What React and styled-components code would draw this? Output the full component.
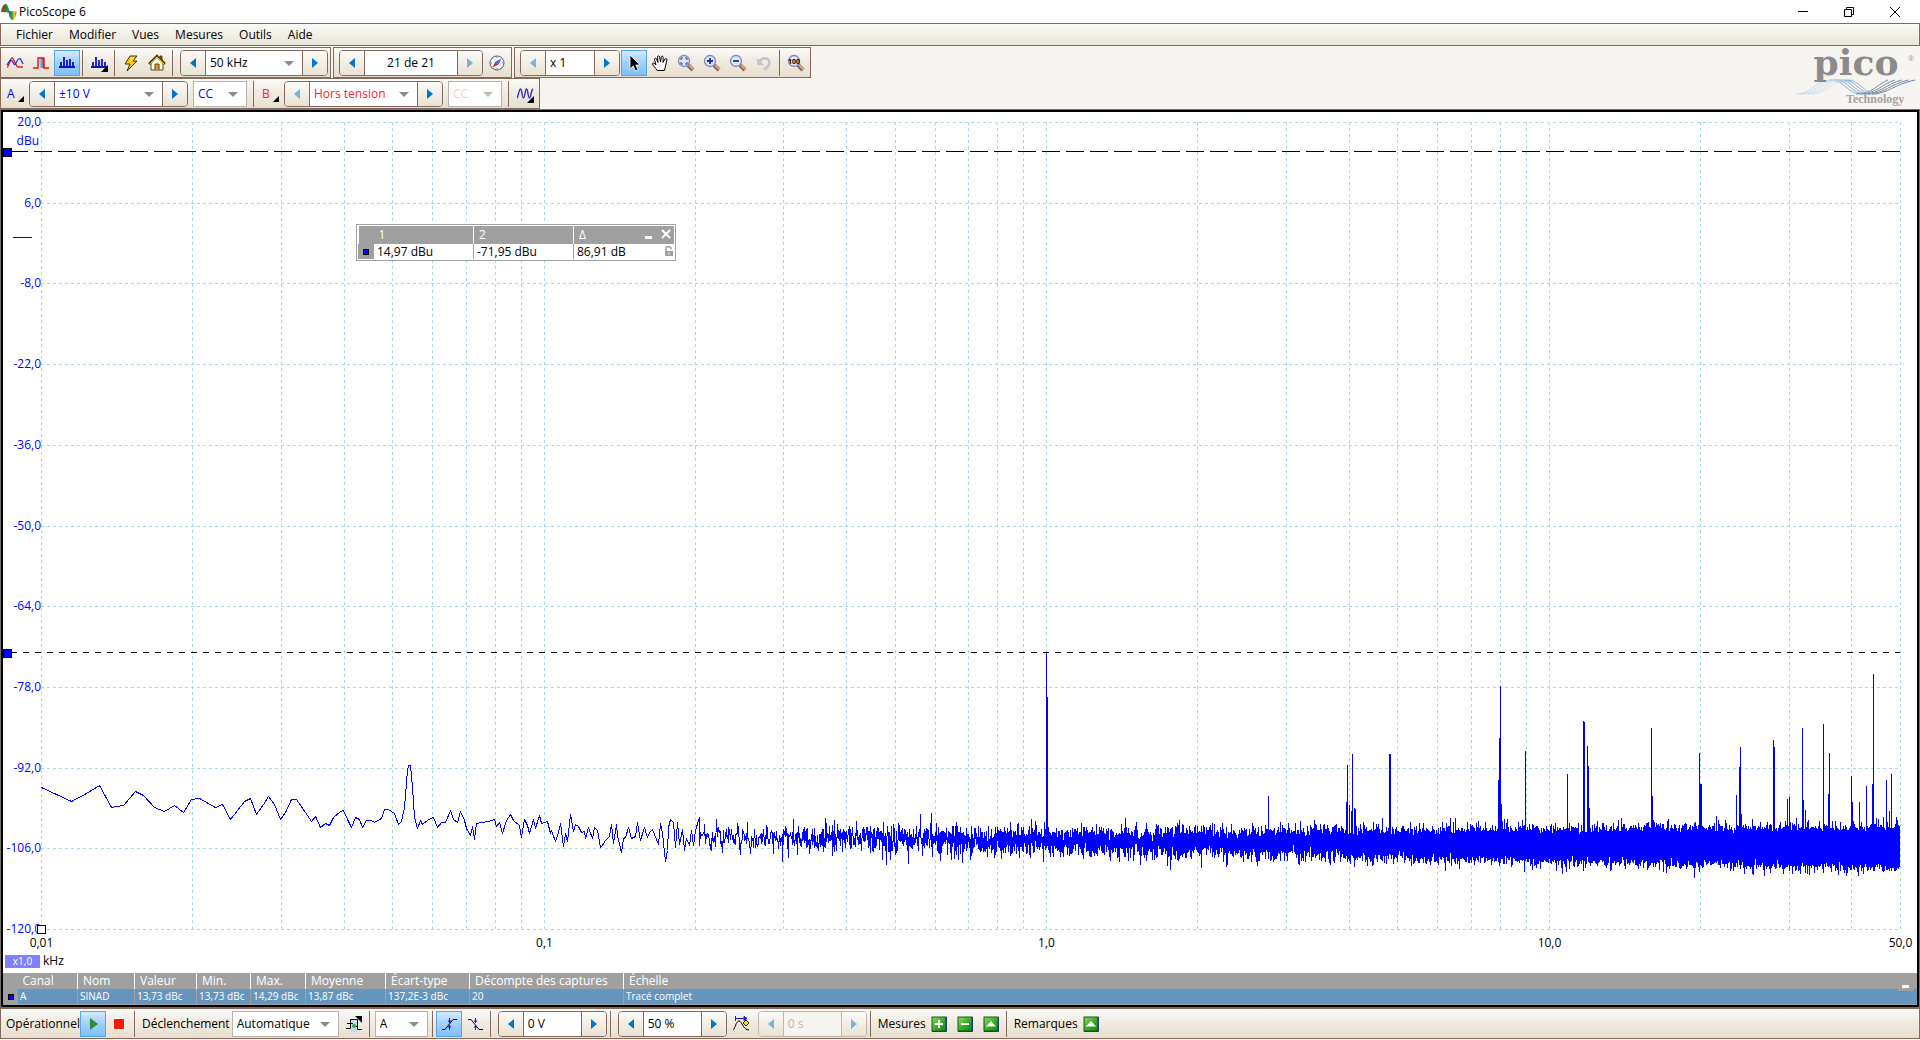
import React, {useLayoutEffect, useRef, useState} from 'react';
import styled, {createGlobalStyle, css} from 'styled-components';

const BROWN = '#85695c';
const BLUE = '#0000ff';

const GlobalStyle = createGlobalStyle`
  * {
    box-sizing: border-box;
  }

  body {
    margin: 0;
    background: #f6f4f0;
    color: #000;
    font: 12px/16px "Open Sans", "Noto Sans", sans-serif;
  }

  button, input, select {
    font: inherit;
    color: inherit;
  }
`;

const Window = styled.div`
  display: flex;
  flex-direction: column;
  height: 100vh;
  min-height: 480px;
  padding-bottom: 1px;
  overflow: hidden;
`;

const TitleBar = styled.header`
  display: flex;
  align-items: center;
  height: 23px;
  padding: 0 2px 0 1px;
  background: #fff;

  h1 {
    flex: 1;
    margin: 0 0 0 2px;
    font-size: 12px;
    font-weight: 400;
  }
`;

const WindowButton = styled.button`
  display: flex;
  align-items: center;
  justify-content: center;
  width: 46px;
  height: 22px;
  padding: 0;
  border: 0;
  background: none;
`;

const MenuBar = styled.nav`
  display: flex;
  align-items: center;
  height: 23px;
  margin-bottom: 1px;
  padding-left: 7px;
  border: 1px solid ${BROWN};
  background: linear-gradient(#fbfaf7, #e9e4d8);

  a {
    padding: 0 8px;
    color: inherit;
    text-decoration: none;
  }
`;

const Header = styled.div`
  display: flex;
  justify-content: space-between;
  height: 62px;
`;

const Strips = styled.div`
  display: flex;
  gap: 2px;
`;

const Strip = styled.div`
  display: flex;
  align-items: center;
  height: 31px;
  padding: 1px;
  border: 1px solid ${BROWN};
  background: linear-gradient(#fcfbf9, #f1ede4 40%, #e7dfcd);
`;

const Tool = styled.button`
  position: relative;
  display: flex;
  flex: none;
  align-items: center;
  justify-content: center;
  width: ${({$narrow}) => ($narrow ? 23 : 26)}px;
  height: 26px;
  padding: 0;
  border: 1px solid transparent;
  background: none;

  ${({$active}) => $active && css`
    border-color: #58a6e4;
    background: linear-gradient(#d3e9fd, #a4d2fb 45%, #7dc0fb);
  `}
`;

const ChannelTool = styled(Tool)`
  justify-content: flex-start;
  padding-left: 4px;
  color: ${({$color}) => $color};

  svg {
    margin: 10px 0 0 auto;
  }
`;

const Separator = styled.i`
  flex: none;
  width: 1px;
  height: 26px;
  margin: 0 3px 0 2px;
  background: ${BROWN};
`;

const SpinBox = styled.div`
  display: flex;
  flex: none;
  width: ${({$width}) => $width}px;
  height: 26px;
  margin: 0 1px 0 4px;
  overflow: hidden;
  border: 1px solid ${({$off}) => ($off ? '#bdb6ae' : BROWN)};
  border-radius: 4px;
  background: ${({$off}) => ($off ? '#f6f4f0' : '#fff')};
`;

const Step = styled.button`
  display: flex;
  align-items: center;
  justify-content: center;
  width: 25px;
  padding: 0;
  border: 0 solid ${({$off}) => ($off ? '#bdb6ae' : BROWN)};
  border-width: ${({$next}) => ($next ? '0 0 0 1px' : '0 1px 0 0')};
  background: linear-gradient(#fbfaf7, #e9e2d3);

  svg {
    opacity: ${({disabled}) => (disabled ? 0.5 : 1)};
  }
`;

const Field = styled.input`
  flex: 1;
  min-width: 0;
  padding: 0 4px;
  border: 0;
  background: none;
  text-align: ${({$center}) => ($center ? 'center' : 'left')};

  &:disabled {
    color: #bdb6ae;
  }
`;

const SelectBox = styled.span`
  position: relative;
  display: flex;
  flex: ${({$width}) => ($width ? 'none' : '1')};
  min-width: 0;
  ${({$width}) => $width && css`
    width: ${$width}px;
    height: 26px;
    margin: 0 4px;
    border: 1px solid #b9b1aa;
    background: #fff;
  `}

  select {
    width: 100%;
    padding: 0 16px 0 4px;
    border: 0;
    appearance: none;
    background: none;
    color: ${({$color}) => $color || '#000'};
    opacity: 1;
  }

  svg {
    position: absolute;
    top: 50%;
    right: 8px;
    margin-top: -2px;
    pointer-events: none;
  }
`;

const Label = styled.span`
  margin: 0 0 0 4px;
`;

const Stage = styled.main`
  display: flex;
  flex: 1;
  flex-direction: column;
  min-height: 0;
  margin: 1px 1px;
  border: 2px solid #000;
  outline: 1px solid #77706c;
  background: #fff;
`;

const PlotArea = styled.section`
  position: relative;
  flex: 1;
  min-height: 0;
  overflow: hidden;

  > svg {
    display: block;
    position: absolute;
  }
`;

const AxisUnit = styled.div`
  position: absolute;
  bottom: 4px;
  left: 2px;
  display: flex;
  gap: 3px;
  align-items: center;

  b {
    width: 35px;
    background: #8080ff;
    color: #fff;
    font-size: 10px;
    font-weight: 400;
    line-height: 13px;
    text-align: center;
  }
`;

const RulerPanel = styled.div`
  position: absolute;
  top: 112px;
  left: 353px;
  width: 320px;
  padding: 1px;
  border: 1px solid #a0a0a0;
  background: #fff;
`;

const RulerTable = styled.table`
  width: 100%;
  table-layout: fixed;
  border-collapse: collapse;
  color: #000;
  line-height: 16px;

  thead tr {
    height: 18px;
  }

  tbody tr {
    height: 15px;
    line-height: 15px;
  }

  thead, td:first-child {
    background: #a0a0a0;
  }

  th {
    padding: 0 5px;
    border-left: 1px solid #fff;
    color: #fff;
    font-weight: 400;
    text-align: left;
  }

  th:nth-child(-n + 2) {
    border-left: 0;
  }

  td {
    padding: 0 3px;
    border-left: 1px solid #a0a0a0;
  }
`;

const PanelButtons = styled.div`
  position: absolute;
  top: 4px;
  right: 4px;
  display: flex;
  gap: 6px;

  button {
    display: flex;
    padding: 0;
    border: 0;
    background: none;
  }
`;

const Lock = styled.span`
  float: right;
  display: flex;
  margin: 2px -2px 0 0;
`;

const MeasureArea = styled.div`
  position: relative;
  border-bottom: 1px solid #a0a0a0;
  background: #a0a0a0;
`;

const MeasureTable = styled.table`
  width: 100%;
  table-layout: fixed;
  border-collapse: collapse;
  color: #fff;

  th {
    height: 16px;
    padding: 0 5px;
    border-left: 1px solid #fff;
    font-weight: 400;
    line-height: 16px;
    text-align: left;
    white-space: nowrap;
  }

  td {
    height: 15px;
    padding: 0 2px;
    border-left: 1px solid #a0a0a0;
    background: #6696bd;
    font-size: 10px;
    line-height: 15px;
  }

  th:nth-child(-n + 2) {
    border-left: 0;
  }

  td:first-child {
    background: #a0a0a0;
  }
`;

const Marker = styled.i`
  display: block;
  width: 6px;
  height: 6px;
  margin: 0 auto;
  border: 1px solid #000;
  background: ${BLUE};
`;

const Collapse = styled.button`
  position: absolute;
  top: 9px;
  right: 3px;
  width: 16px;
  height: 9px;
  padding: 3px 5px 3px 4px;
  border: 0;
  background: #a0a0a0;

  &::before {
    content: "";
    display: block;
    height: 3px;
    background: #fff;
  }
`;

const Footer = styled(Strip).attrs({as: 'footer'})`
  flex: none;

  > ${SelectBox} {
    margin: 0 2px;
  }
`;

/* ---- icons ---- */

const Arrow = ({next}) => (
  <svg width="6" height="10" viewBox="0 0 6 10" fill="#0078c8">
    <path d={next ? 'M0 0L6 5L0 10Z' : 'M6 0L0 5L6 10Z'} />
  </svg>
);

const Caret = ({off}) => (
  <svg width="10" height="5" viewBox="0 0 10 5" fill={off ? '#c3bab3' : '#8c8c8c'}>
    <path d="M0 0H10L5 5Z" />
  </svg>
);

const Icon = ({children, size = 18}) => (
  <svg width={size} height={size} viewBox="0 0 18 18" fill="none">{children}</svg>
);

const Corner = () => <path d="M18 11V18H11Z" fill="#000" />;

const AppLogo = () => (
  <svg width="16" height="16" viewBox="0 0 16 16">
    <defs>
      <linearGradient id="app" x1="0" x2="1" y1="0" y2="0">
        <stop offset="0" stopColor="#d33" />
        <stop offset=".22" stopColor="#5c5a28" />
        <stop offset=".4" stopColor="#1ea032" />
        <stop offset=".55" stopColor="#2b58c8" />
        <stop offset=".72" stopColor="#38a838" />
        <stop offset=".86" stopColor="#f0d020" />
        <stop offset="1" stopColor="#d43020" />
      </linearGradient>
    </defs>
    <path
      fill="url(#app)"
      d="M0 7C1 2 3 0 4.500 0C7 0 7.500 5 8.500 7L15.500 7.500C15 13 13.500 16 11.500 16C9 16 8.500 12 7.500 8.500L0 8Z"
    />
  </svg>
);

const ScopeIcon = () => (
  <Icon>
    <path d="M1 13C3 13 4 4 6 4S10 13 12 13H17" stroke="#e02030" strokeWidth="1.500" />
    <path d="M1 11C3 8 4 5 6 7S8 13 10 9S13 3 15 6L17 10" stroke="#2030d8" strokeWidth="1.300" />
  </Icon>
);

const PersistenceIcon = () => (
  <Icon>
    <defs>
      <linearGradient id="pers" x1="0" x2="1" y1="0" y2="0">
        <stop offset="0" stopColor="#f4f8fa" />
        <stop offset=".5" stopColor="#60c0e8" />
        <stop offset="1" stopColor="#d02050" />
      </linearGradient>
    </defs>
    <path d="M6 4H12V14H6Z" fill="url(#pers)" />
    <path d="M1 14H6V4H12V14H17" stroke="#e81010" strokeWidth="1.400" />
  </Icon>
);

const SpectrumIcon = ({corner}) => (
  <Icon>
    <path d="M1 13H17M3 13V8M6 13V3M9 13V6M12 13V5M15 13V8" stroke="#1010c8" strokeWidth="1.800" />
    {corner && <Corner />}
  </Icon>
);

const BoltIcon = () => (
  <Icon>
    <path d="M8 2H15L11 7H15L5 17L8 10H3Z" fill="#ffc810" stroke="#4a3000" />
    <path d="M9 4H12L8 8" stroke="#fff0a0" />
  </Icon>
);

const HomeIcon = () => (
  <Icon>
    <path d="M12 2H14V6H12Z" fill="#b04030" stroke="#503010" strokeWidth=".8" />
    <path d="M3 9L9 3L15 9V16H3Z" fill="#fffbe0" stroke="#604010" />
    <path d="M1 10L9 2L17 10" stroke="#604010" strokeWidth="2.500" />
    <path d="M2 10L9 3L16 10" stroke="#f8c830" />
    <path d="M7 16V10H11V16" fill="#d89830" stroke="#604010" />
  </Icon>
);

const CompassIcon = () => (
  <Icon>
    <circle cx="9" cy="9" r="7" fill="#f6f8ff" stroke="#505868" />
    <path d="M9 3V4M9 14V15M3 9H4M14 9H15" stroke="#4080e0" />
    <path d="M13.500 4.500L10.500 10.500L7.500 7.500Z" fill="#4068e8" />
    <path d="M4.500 13.500L7.500 7.500L10.500 10.500Z" fill="#e82020" />
  </Icon>
);

const PointerIcon = () => (
  <Icon>
    <path d="M5 1V15L8.300 12L10.500 17L13 16L10.800 11H15Z" fill="#000" stroke="#fff" strokeWidth=".8" />
  </Icon>
);

const HandIcon = () => (
  <Icon>
    <path
      d="M6 16.500C5 14 2 12 1.500 10C1.500 8.500 3.500 8.500 5 11L3.500 5.500C3.500 4 5 3.800 5.500 5L7 8.500L6.500 3C6.800 1.500 8.300 1.500 8.600 3L9.500 8L10.300 3C10.800 1.700 12.200 2 12.200 3.300L12 8.500L14 5C15 4 16.200 4.700 15.900 6L14.500 12L13.500 16.500Z"
      fill="#fff"
      stroke="#000"
    />
  </Icon>
);

const Magnifier = ({kind}) => (
  <Icon>
    <path d="M11 11L16 16" stroke="#706878" strokeWidth="4" />
    <path d="M12 11L16.500 15.500" stroke="#f4a050" strokeWidth="2" />
    <circle cx="7" cy="7" r="5.500" fill="#d4eaff" stroke="#8888a8" strokeWidth="1.300" />
    {kind === 'in' && <path d="M4 7H10M7 4V10" stroke="#2828a8" strokeWidth="1.800" />}
    {kind === 'out' && <path d="M4 7H10" stroke="#2828a8" strokeWidth="1.800" />}
    {kind === 'area' && <path d="M4 6V4H6M8 4H10V6M10 8V10H8M6 10H4V8" stroke="#3838b8" />}
    {kind === 'full' && <text x="1" y="10" fontSize="7" fontWeight="700" fill="#000">100</text>}
  </Icon>
);

const UndoIcon = () => (
  <Icon>
    <path d="M4 8C8 2 16 4 14 10C13.500 13 11 14.500 9 15.500" stroke="#c0c6d4" strokeWidth="2.600" />
    <path d="M2 4V11H9Z" fill="#c0c6d4" />
  </Icon>
);

const MathIcon = () => (
  <Icon>
    <path d="M1 13C2 13 3 4 4.500 4S6 13 7.500 13S9 4 10.500 4S12 13 13.500 13S15 5 17 4" stroke="#3030b0" strokeWidth="1.400" />
    <Corner />
  </Icon>
);

const PlayIcon = () => (
  <Icon>
    <path d="M6 3L14 9L6 15Z" fill="#2e8b2e" />
  </Icon>
);

const StopIcon = () => (
  <Icon>
    <path d="M3 3H15V15H3Z" fill="#fff" />
    <path d="M4 4H14V14H4Z" fill="#ff1800" />
  </Icon>
);

const TriggerIcon = () => (
  <Icon>
    <path d="M6 5H13V17H6Z" fill="#c4dcf8" />
    <path d="M1 13.500H5.500V4.500H12.500V14.500H17" stroke="#000" />
    <path d="M2 8.500H8M9 11.500H13" stroke="#000" />
    <path d="M10 1H17V8Z" fill="#000" />
    <circle cx="9" cy="11" r="2" fill="#18c030" />
  </Icon>
);

const EdgeIcon = ({falling}) => (
  <Icon>
    <path
      d={falling ? 'M2 4.500H5L13 14.500H17' : 'M2 14.500H5L13 4.500H17'}
      stroke="#000"
    />
    <path d="M9.500 3V8M9.500 10V15" stroke="#1818e0" />
    <path d="M7.500 5.500H11.500L9.500 8ZM7.500 12.500H11.500L9.500 10Z" fill="#1818e0" />
  </Icon>
);

const DelayIcon = () => (
  <Icon>
    <path d="M1 15C3 14 4 6 7 6S11 15 17 15" stroke="#000" />
    <path d="M4 3.500H15" stroke="#1818e0" />
    <path d="M3.500 1V6M12 1.500L15 3.500L12 5.500Z" stroke="#1818e0" fill="#1818e0" />
    <path d="M14 5L17 8L14 11L11 8Z" fill="#f8e010" stroke="#303020" />
  </Icon>
);

const GreenIcon = ({kind}) => (
  <Icon>
    <defs>
      <linearGradient id={`green-${kind}`} x1="0" x2="1" y1="0" y2="1">
        <stop offset="0" stopColor="#8cdc60" />
        <stop offset=".55" stopColor="#38a828" />
        <stop offset="1" stopColor="#009000" />
      </linearGradient>
    </defs>
    <rect x="2" y="2" width="14" height="14" fill={`url(#green-${kind})`} stroke="#185820" />
    <path d="M16.500 2V16.500H2" stroke="#203870" />
    {kind === 'add' && <path d="M9 5V13M5 9H13" stroke="#fff" strokeWidth="2" />}
    {kind === 'remove' && <path d="M5 9H13" stroke="#fff" strokeWidth="2" />}
    {(kind === 'up' || kind === 'notes') && <path d="M4 11.500L9 6L14 11.500Z" fill="#fff" />}
  </Icon>
);

const waves = [0, 4, 8, 12, 16];

const Logo = styled.svg`
  flex: none;
  overflow: visible;
`;

const PicoLogo = () => (
  <Logo width="124" height="62" viewBox="0 0 124 62" fill="none">
    {waves.map((d, i) => (
      <g key={d}>
        <path
          d={`M${d} 47C${16 + d} 47 ${20 + d} 33 ${34 + d} 33H${42 + d}`}
          stroke="#c2dbf0"
          opacity={1 - i * 0.1}
        />
        <path
          d={`M${34 + d} 33C${50 + d} 33 ${50 + d} 47 ${66 + d} 47`}
          stroke="#8fb2d6"
        />
        <path
          d={`M${60 + d} 47C${76 + d} 47 ${82 + d} 37 ${92 + d * 1.7} 33`}
          stroke="#76889e"
        />
      </g>
    ))}
    <text
      x="60"
      y="28"
      fontFamily="DejaVu Serif"
      fontSize="36"
      fontWeight="700"
      textAnchor="middle"
      fill="#8b8b8b"
    >
      pico
    </text>
    <text x="112" y="14" fontSize="7" fill="#999">®</text>
    <text x="50" y="56" fontFamily="Liberation Serif" fontSize="12" fontWeight="700" fill="#a2a2a2">
      Technology
    </text>
  </Logo>
);

/* ---- spectrum ---- */

// plot units: one per pixel at a width of 1859 and a height of 807
const PLOT_W = 1859;
const PLOT_H = 807;
const DECADE = PLOT_W / Math.log10(5000);

const lowBand = [
  0, 665, 30, 679, 45, 671, 58, 663, 70, 685, 82, 683, 94, 669, 102, 673, 113, 685, 123, 689,
  133, 683, 142, 690, 150, 677, 158, 676, 174, 685, 181, 682, 189, 697, 203, 679, 209, 676,
  215, 692, 222, 682, 227, 674, 233, 682, 239, 697, 244, 690, 250, 677, 255, 677, 264, 690,
  270, 699, 274, 694, 279, 705, 284, 701, 288, 703, 292, 695, 299, 689, 302, 688, 306, 697,
  310, 705, 314, 695, 318, 697, 321, 705, 325, 698, 330, 698, 333, 700, 340, 696, 343, 687,
  347, 687, 353, 691, 357, 702, 360, 699, 363, 685, 366, 648, 367, 643, 369, 643, 371, 665,
  373, 695, 376, 706, 379, 698, 381, 702, 387, 697, 392, 695, 396, 705, 400, 700, 404, 700,
  409, 688, 412, 697, 416, 700, 419, 689, 423, 698, 425, 706, 429, 713, 431, 704, 433, 717,
  435, 701, 447, 699, 453, 697, 455, 704, 458, 700, 461, 711, 465, 698, 469, 692, 472, 698,
  478, 703, 480, 715, 483, 697, 486, 703, 488, 711, 492, 697, 494, 706, 498, 693, 500, 701,
  506, 699, 509, 711, 510, 708, 514, 719, 517, 710, 519, 701, 522, 724, 524, 711, 526, 719,
  529, 692, 532, 709, 534, 702, 537, 704, 540, 710, 543, 709, 544, 716, 547, 705, 551, 716,
  553, 705, 556, 708, 559, 725, 561, 723, 564, 718, 568, 714, 570, 702, 572, 721, 575, 702,
  576, 713, 580, 730, 582, 716, 584, 715, 587, 705, 590, 716, 594, 714, 596, 700, 599, 718,
  603, 705, 606, 715, 608, 710, 611, 707, 615, 717, 617, 722, 619, 701, 621, 711, 624, 739,
  626, 728, 627, 705, 629, 697, 632, 700, 634, 725, 636, 700, 638, 722, 641, 707, 643, 728,
  645, 716, 648, 723, 650, 708, 652, 723, 654, 708,
];

const peaks = [
  [1005, 530], [1006, 574], [1227, 673], [1305, 679], [1306, 642], [1308, 682], [1310, 688],
  [1311, 631], [1313, 685], [1314, 686], [1348, 631], [1349, 631], [1457, 657], [1458, 615],
  [1459, 563], [1460, 681], [1461, 698], [1466, 696], [1484, 628], [1526, 651],
  [1542, 598], [1543, 599], [1546, 623], [1547, 643], [1548, 685], [1610, 605], [1611, 673],
  [1658, 630], [1659, 661], [1660, 661], [1695, 672], [1698, 644], [1699, 624], [1700, 691],
  [1732, 617], [1733, 624], [1746, 676], [1748, 674], [1755, 695], [1761, 605], [1762, 677],
  [1764, 687], [1782, 601], [1787, 671], [1788, 630], [1810, 653], [1811, 679], [1818, 679],
  [1825, 663], [1831, 661], [1832, 551], [1845, 657], [1848, 688], [1850, 651],
];

let seed = 20;

const random = () => {
  seed = (seed * 16807) % 2147483647;
  return seed / 2147483647;
};

const gauss = () =>
  Math.sqrt(-2 * Math.log(random())) * Math.cos(2 * Math.PI * random());

// every FFT bin above the low band, reduced to a min and a max per column
const noiseColumns = () => {
  const columns = {};
  const step = 50000 / 65536;

  for (let f = 204; f < 50000; f += step) {
    const x = Math.floor(Math.log10(f / 10) * DECADE);
    const centre = 715 + (x - 654) * 0.007;
    const g = gauss();
    const y = Math.round(centre + g * (g > 0 ? 8 : 7));
    const column = columns[x] || (columns[x] = {min: y, max: y, first: y, last: y});

    column.min = Math.min(column.min, y);
    column.max = Math.max(column.max, y);
    column.last = y;
  }

  peaks.forEach(([x, y]) => {
    columns[x].min = y;
  });

  return columns;
};

const tracePoints = () => {
  const points = [];

  for (let i = 0; i < lowBand.length; i += 2) {
    points.push([lowBand[i], lowBand[i + 1]]);
  }

  Object.entries(noiseColumns()).forEach(([x, {min, max, first, last}]) => {
    points.push([+x, first], [+x, min], [+x, max], [+x, last]);
  });

  return points;
};

const trace = tracePoints();

const levels = ['20,0', '6,0', '-8,0', '-22,0', '-36,0', '-50,0', '-64,0', '-78,0', '-92,0', '-106,0', '-120,0'];
const decades = [[10, '0,01'], [100, '0,1'], [1000, '1,0'], [10000, '10,0'], [50000, '50,0']];

const gridFrequencies = [10, 100, 1000, 10000].flatMap(base =>
  [1, 2, 3, 4, 5, 6, 7, 8, 9].map(n => n * base)
).filter(f => f <= 50000);

const useSize = () => {
  const ref = useRef();
  const [size, setSize] = useState({width: 0, height: 0});

  useLayoutEffect(() => {
    const measure = () => setSize({
      width: ref.current.clientWidth,
      height: ref.current.clientHeight
    });
    const observer = new ResizeObserver(measure);

    measure();
    observer.observe(ref.current);

    return () => observer.disconnect();
  }, []);

  return [ref, size];
};

const Spectrum = ({width, height}) => {
  const left = 38;
  const top = 10;
  const w = Math.max(width - left - 17, 0);
  const h = Math.max(height - top - 44, 0);
  const px = x => Math.round(left + x * w / PLOT_W) + 0.5;
  const py = y => Math.round(top + y * h / PLOT_H) + 0.5;
  const fx = f => px(Math.log10(f / 10) * DECADE);

  return (
    <svg width={width} height={height} shapeRendering="crispEdges" fontSize="12">
      <g stroke="#add8e6" strokeDasharray="3 3">
        {levels.map((level, i) => (
          <path key={level} d={`M${left} ${py(i * PLOT_H / 10)}H${left + w}`} />
        ))}
        {gridFrequencies.map(f => (
          <path key={f} d={`M${fx(f)} ${top}V${top + h}`} />
        ))}
      </g>
      <g fill={BLUE} textAnchor="end">
        {levels.map((level, i) => (
          <text key={level} x={left} y={py(i * PLOT_H / 10) + 3.5}>{level}</text>
        ))}
        <text x="36" y={top + 23}>dBu</text>
      </g>
      <g textAnchor="middle">
        {decades.map(([f, label]) => (
          <text key={f} x={fx(f)} y={top + h + 18}>{label}</text>
        ))}
      </g>
      <path d="M10 125.500H29" stroke={BLUE} />
      <path d={`M7 ${py(29)}H${left + w}`} stroke="#000" strokeDasharray="18 6" />
      <path d={`M8 ${py(530)}H${left + w}`} stroke="#000" strokeDasharray="6 6" />
      <path
        d={'M' + trace.map(([x, y]) => `${px(x)} ${py(y)}`).join('L')}
        fill="none"
        stroke={BLUE}
        strokeLinejoin="bevel"
      />
      <rect x="0.500" y={py(29) - 3} width="8" height="8" fill={BLUE} stroke="#000" />
      <rect x="0.500" y={py(530) - 3} width="8" height="8" fill={BLUE} stroke="#000" />
      <rect x={left - 3.5} y={top + h - 3.5} width="8" height="8" fill="#fff" stroke="#000" />
    </svg>
  );
};

/* ---- controls ---- */

const Select = ({label, value, width, color, disabled}) => (
  <SelectBox $width={width} $color={color}>
    <select aria-label={label} defaultValue={value} disabled={disabled}>
      <option>{value}</option>
    </select>
    <Caret off={disabled} />
  </SelectBox>
);

const Spinner = ({label, value, width, select, center, color, prevOff, nextOff, disabled}) => (
  <SpinBox $width={width} $off={disabled}>
    <Step aria-label={`${label} -`} disabled={prevOff || disabled} $off={disabled}>
      <Arrow />
    </Step>
    {select
      ? <Select label={label} value={value} color={color} />
      : <Field aria-label={label} defaultValue={value} disabled={disabled} $center={center} />}
    <Step $next aria-label={`${label} +`} disabled={nextOff || disabled} $off={disabled}>
      <Arrow next />
    </Step>
  </SpinBox>
);

const Channel = ({name, color}) => (
  <ChannelTool $narrow $color={color} aria-label={`Canal ${name}`}>
    {name}
    <svg width="6" height="6" viewBox="0 0 6 6">
      <path d="M6 0V6H0Z" />
    </svg>
  </ChannelTool>
);

const Toolbars = () => (
  <div>
    <Strips>
      <Strip>
        <Tool aria-label="Oscilloscope"><ScopeIcon /></Tool>
        <Tool aria-label="Persistance"><PersistenceIcon /></Tool>
        <Tool aria-label="Spectre" $active><SpectrumIcon /></Tool>
        <Separator />
        <Tool aria-label="Options de spectre"><SpectrumIcon corner /></Tool>
        <Separator />
        <Tool aria-label="Configuration auto"><BoltIcon /></Tool>
        <Tool aria-label="Accueil"><HomeIcon /></Tool>
        <Separator />
        <Spinner label="Plage de fréquences" value="50 kHz" width={148} select />
      </Strip>
      <Strip>
        <Spinner label="Tampon" value="21 de 21" width={144} center nextOff />
        <Tool aria-label="Navigateur"><CompassIcon /></Tool>
      </Strip>
      <Strip>
        <Spinner label="Zoom" value="x 1" width={100} prevOff />
        <Tool aria-label="Sélection" $active><PointerIcon /></Tool>
        <Tool aria-label="Main"><HandIcon /></Tool>
        <Tool aria-label="Zoom fenêtre"><Magnifier kind="area" /></Tool>
        <Tool aria-label="Zoom avant"><Magnifier kind="in" /></Tool>
        <Tool aria-label="Zoom arrière"><Magnifier kind="out" /></Tool>
        <Tool aria-label="Annuler" disabled><UndoIcon /></Tool>
        <Separator />
        <Tool aria-label="Zoom complet"><Magnifier kind="full" /></Tool>
      </Strip>
    </Strips>
    <Strips>
      <Strip>
        <Channel name="A" color={BLUE} />
        <Spinner label="Plage A" value="±10 V" width={159} color={BLUE} select />
        <Select label="Couplage A" value="CC" width={54} color={BLUE} />
        <Separator />
        <Channel name="B" color="#ff2038" />
        <Spinner label="Plage B" value="Hors tension" width={159} color="#ff2038" select prevOff />
        <Select label="Couplage B" value="CC" width={54} color="#ffc8d0" disabled />
        <Separator />
        <Tool aria-label="Voies mathématiques"><MathIcon /></Tool>
      </Strip>
    </Strips>
  </div>
);

const Rulers = () => (
  <RulerPanel>
    <RulerTable>
      <colgroup>
        <col width="15" />
        <col width="100" />
        <col width="100" />
        <col />
      </colgroup>
      <thead>
        <tr><th /><th>1</th><th>2</th><th>Δ</th></tr>
      </thead>
      <tbody>
        <tr>
          <td><Marker /></td>
          <td>14,97 dBu</td>
          <td>-71,95 dBu</td>
          <td>
            86,91 dB
            <Lock>
              <svg width="8" height="10" viewBox="0 0 8 10">
                <path d="M0 5H8V10H0Z" fill="#a0a0a0" />
                <path d="M1 5V2.500C1 0 6 0 6 2.500V3.500" fill="none" stroke="#a0a0a0" strokeWidth="1.500" />
                <path d="M4 6.500V8.500" stroke="#fff" />
              </svg>
            </Lock>
          </td>
        </tr>
      </tbody>
    </RulerTable>
    <PanelButtons>
      <button aria-label="Réduire">
        <svg width="12" height="10"><path d="M2 8.500H9" stroke="#fff" strokeWidth="3" /></svg>
      </button>
      <button aria-label="Fermer">
        <svg width="10" height="10"><path d="M1 1L9 9M9 1L1 9" stroke="#fff" strokeWidth="2" /></svg>
      </button>
    </PanelButtons>
  </RulerPanel>
);

const measureColumns = [
  ['Canal', 'A', 60],
  ['Nom', 'SINAD', 57],
  ['Valeur', '13,73 dBc', 62],
  ['Min.', '13,73 dBc', 54],
  ['Max.', '14,29 dBc', 55],
  ['Moyenne', '13,87 dBc', 80],
  ['Écart-type', '137,2E-3 dBc', 84],
  ['Décompte des captures', '20', 154],
  ['Échelle', 'Tracé complet']
];

const Measures = () => (
  <MeasureArea>
    <MeasureTable>
      <colgroup>
        <col width="14" />
        {measureColumns.map(([title, , width]) => <col key={title} width={width} />)}
      </colgroup>
      <thead>
        <tr>
          <th />
          {measureColumns.map(([title]) => <th key={title}>{title}</th>)}
        </tr>
      </thead>
      <tbody>
        <tr>
          <td><Marker /></td>
          {measureColumns.map(([title, value]) => <td key={title}>{value}</td>)}
        </tr>
      </tbody>
    </MeasureTable>
    <Collapse aria-label="Réduire les mesures" />
  </MeasureArea>
);

const View = () => {
  const [ref, size] = useSize();

  return (
    <Stage>
      <PlotArea ref={ref}>
        <Spectrum {...size} />
        <AxisUnit><b>x1,0</b>kHz</AxisUnit>
        <Rulers />
      </PlotArea>
      <Measures />
    </Stage>
  );
};

const menus = ['Fichier', 'Modifier', 'Vues', 'Mesures', 'Outils', 'Aide'];

const App = () => (
  <Window>
    <GlobalStyle />
    <TitleBar>
      <AppLogo />
      <h1>PicoScope 6</h1>
      <WindowButton aria-label="Réduire">
        <svg width="10" height="10"><path d="M0 4.500H10" stroke="#000" /></svg>
      </WindowButton>
      <WindowButton aria-label="Restaurer">
        <svg width="10" height="10" fill="none" stroke="#000">
          <path d="M0.500 2.500H7.500V9.500H0.500ZM2.500 2.500V0.500H9.500V7.500H7.500" />
        </svg>
      </WindowButton>
      <WindowButton aria-label="Fermer">
        <svg width="10" height="10"><path d="M0 0L10 10M10 0L0 10" stroke="#000" /></svg>
      </WindowButton>
    </TitleBar>
    <MenuBar>
      {menus.map(menu => <a key={menu} href="#menu">{menu}</a>)}
    </MenuBar>
    <Header>
      <Toolbars />
      <PicoLogo />
    </Header>
    <View />
    <Footer>
      <Label>Opérationnel</Label>
      <Tool aria-label="Démarrer" $active><PlayIcon /></Tool>
      <Tool aria-label="Arrêter"><StopIcon /></Tool>
      <Separator />
      <Label>Déclenchement</Label>
      <Select label="Déclenchement" value="Automatique" width={107} />
      <Tool aria-label="Déclenchement avancé"><TriggerIcon /></Tool>
      <Separator />
      <Select label="Source" value="A" width={53} />
      <Separator />
      <Tool aria-label="Front montant" $active><EdgeIcon /></Tool>
      <Tool aria-label="Front descendant"><EdgeIcon falling /></Tool>
      <Separator />
      <Spinner label="Seuil" value="0 V" width={109} />
      <Separator />
      <Spinner label="Pré-déclenchement" value="50 %" width={109} />
      <Tool aria-label="Retard"><DelayIcon /></Tool>
      <Spinner label="Temps de retard" value="0 s" width={109} disabled />
      <Separator />
      <Label>Mesures</Label>
      <Tool aria-label="Ajouter une mesure"><GreenIcon kind="add" /></Tool>
      <Tool aria-label="Supprimer une mesure"><GreenIcon kind="remove" /></Tool>
      <Tool aria-label="Modifier une mesure"><GreenIcon kind="up" /></Tool>
      <Separator />
      <Label>Remarques</Label>
      <Tool aria-label="Afficher les remarques"><GreenIcon kind="notes" /></Tool>
    </Footer>
  </Window>
);

export {App as default};
